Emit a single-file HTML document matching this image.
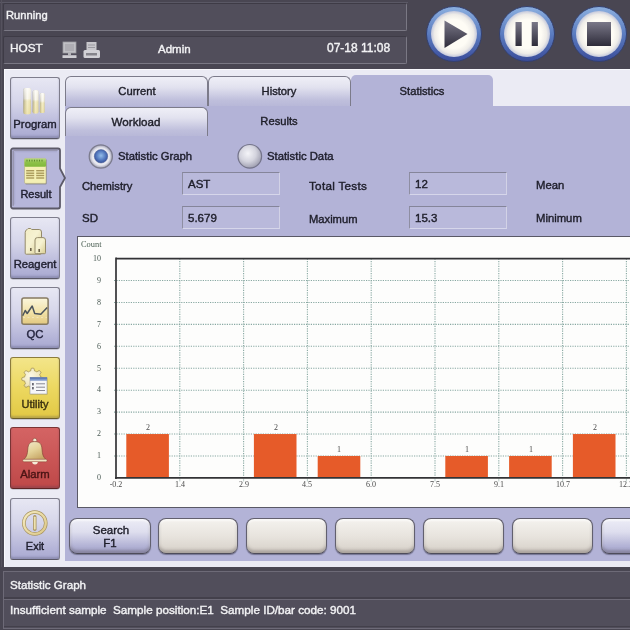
<!DOCTYPE html>
<html><head><meta charset="utf-8">
<style>
html,body{margin:0;padding:0;width:630px;height:630px;overflow:hidden;background:#494652;}
body{position:relative;font-family:"Liberation Sans", sans-serif;}
.t{position:absolute;white-space:nowrap;-webkit-text-stroke:0.4px currentColor;will-change:transform;}
.b{position:absolute;box-sizing:border-box;}
svg{position:absolute;overflow:visible;}
</style></head><body>

<div class="b" style="left:0px;top:0px;width:630px;height:69px;background:#494652;"></div>
<div class="b" style="left:0px;top:2px;width:408px;height:1px;background:#5a5865;"></div>
<div class="b" style="left:1px;top:0px;width:1px;height:630px;background:#55525e;"></div>
<div class="b" style="left:3px;top:3px;width:404px;height:28px;background:#514e5b;border-top:1px solid #3e3b46;border-left:1px solid #3e3b46;border-right:1.5px solid #7a7884;border-bottom:1.5px solid #7a7884;border-radius:2px;"></div>
<div class="b" style="left:3px;top:36px;width:404px;height:28px;background:#514e5b;border-top:1px solid #3e3b46;border-left:1px solid #3e3b46;border-right:1.5px solid #7a7884;border-bottom:1.5px solid #7a7884;border-radius:2px;"></div>
<div class="t" style="left:6.00px;top:10.02px;font-size:11.2px;line-height:11.2px;color:#f2f2f4;font-family:'Liberation Sans', sans-serif;">Running</div>
<div class="t" style="left:9.80px;top:42.71px;font-size:11.8px;line-height:11.8px;color:#f2f2f4;font-family:'Liberation Sans', sans-serif;">HOST</div>
<div class="t" style="left:157.50px;top:43.67px;font-size:11.5px;line-height:11.5px;color:#f2f2f4;font-family:'Liberation Sans', sans-serif;">Admin</div>
<div class="t" style="left:327.40px;top:42.44px;font-size:12px;line-height:12px;color:#f2f2f4;font-family:'Liberation Sans', sans-serif;">07-18 11:08</div>
<svg style="left:62px;top:41px" width="16" height="18" viewBox="0 0 16 18">
<rect x="1" y="1" width="13" height="11" fill="#c4c3c8" stroke="#9a999f" stroke-width="0.8"/>
<rect x="2.8" y="2.8" width="9.4" height="7.4" fill="#aeadb3"/>
<rect x="6" y="12" width="3" height="2.2" fill="#b4b3b8"/>
<rect x="0.5" y="14.2" width="14" height="2.8" fill="#cfced3"/>
</svg>
<svg style="left:83px;top:41px" width="18" height="18" viewBox="0 0 18 18">
<rect x="3.5" y="1" width="10" height="9" fill="#c8c7cc"/>
<line x1="5" y1="4" x2="12" y2="4" stroke="#9a99a0" stroke-width="1"/>
<line x1="5" y1="6.5" x2="12" y2="6.5" stroke="#9a99a0" stroke-width="1"/>
<rect x="0.5" y="9" width="16.5" height="8" rx="1.5" fill="#d2d1d6"/>
<rect x="3" y="12" width="11" height="2.5" fill="#85848b"/>
</svg>
<svg style="left:426px;top:6.200000000000003px" width="56" height="56" viewBox="0 0 56 56">
<defs>
<linearGradient id="ring454" x1="0" y1="0" x2="0" y2="1"><stop offset="0" stop-color="#8cb0e0"/><stop offset="0.5" stop-color="#5b7cc0"/><stop offset="1" stop-color="#3a4c9a"/></linearGradient>
<radialGradient id="face454" cx="0.5" cy="0.5" r="0.5"><stop offset="0.62" stop-color="#fefcf5"/><stop offset="0.85" stop-color="#eeece8"/><stop offset="1" stop-color="#c4c8dc"/></radialGradient>
<linearGradient id="ico454" x1="0" y1="0" x2="0" y2="1"><stop offset="0" stop-color="#7a7888"/><stop offset="1" stop-color="#2e2c3a"/></linearGradient>
</defs>
<circle cx="28" cy="28" r="27.5" fill="url(#ring454)" stroke="#34406e" stroke-width="1"/>
<circle cx="28" cy="28" r="23" fill="url(#face454)"/>
<polygon points="18.5,14.5 41.5,28 18.5,42" fill="url(#ico454)"/>
</svg>
<svg style="left:498.5px;top:6.200000000000003px" width="56" height="56" viewBox="0 0 56 56">
<defs>
<linearGradient id="ring526.5" x1="0" y1="0" x2="0" y2="1"><stop offset="0" stop-color="#8cb0e0"/><stop offset="0.5" stop-color="#5b7cc0"/><stop offset="1" stop-color="#3a4c9a"/></linearGradient>
<radialGradient id="face526.5" cx="0.5" cy="0.5" r="0.5"><stop offset="0.62" stop-color="#fefcf5"/><stop offset="0.85" stop-color="#eeece8"/><stop offset="1" stop-color="#c4c8dc"/></radialGradient>
<linearGradient id="ico526.5" x1="0" y1="0" x2="0" y2="1"><stop offset="0" stop-color="#7a7888"/><stop offset="1" stop-color="#2e2c3a"/></linearGradient>
</defs>
<circle cx="28" cy="28" r="27.5" fill="url(#ring526.5)" stroke="#34406e" stroke-width="1"/>
<circle cx="28" cy="28" r="23" fill="url(#face526.5)"/>
<rect x="16.5" y="16" width="6.2" height="24" fill="url(#ico526.5)"/><rect x="32.7" y="16" width="6.2" height="24" fill="url(#ico526.5)"/>
</svg>
<svg style="left:571px;top:6.200000000000003px" width="56" height="56" viewBox="0 0 56 56">
<defs>
<linearGradient id="ring599" x1="0" y1="0" x2="0" y2="1"><stop offset="0" stop-color="#8cb0e0"/><stop offset="0.5" stop-color="#5b7cc0"/><stop offset="1" stop-color="#3a4c9a"/></linearGradient>
<radialGradient id="face599" cx="0.5" cy="0.5" r="0.5"><stop offset="0.62" stop-color="#fefcf5"/><stop offset="0.85" stop-color="#eeece8"/><stop offset="1" stop-color="#c4c8dc"/></radialGradient>
<linearGradient id="ico599" x1="0" y1="0" x2="0" y2="1"><stop offset="0" stop-color="#7a7888"/><stop offset="1" stop-color="#2e2c3a"/></linearGradient>
</defs>
<circle cx="28" cy="28" r="27.5" fill="url(#ring599)" stroke="#34406e" stroke-width="1"/>
<circle cx="28" cy="28" r="23" fill="url(#face599)"/>
<rect x="16" y="16" width="24" height="24" fill="url(#ico599)"/>
</svg>
<div class="b" style="left:3.5px;top:68.5px;width:626.5px;height:498.5px;background:#ebebf4;border-left:1px solid #f8f8fc;border-top:1.5px solid #f8f8fc;"></div>
<div class="b" style="left:65px;top:106px;width:565px;height:455px;background:#b3b3d7;"></div>
<div class="b" style="left:65px;top:76px;width:143px;height:30px;background:linear-gradient(#efeff7 0%,#e2e2ef 35%,#bfbfdc 80%,#b8b8d8 100%);border:1px solid #7c7b8a;border-bottom:none;border-radius:6px 6px 0 0;"></div>
<div class="t" style="left:36.50px;width:200px;text-align:center;top:85.52px;font-size:11.2px;line-height:11.2px;color:#1e1e28;font-family:'Liberation Sans', sans-serif;">Current</div>
<div class="b" style="left:207.5px;top:76px;width:143px;height:30px;background:linear-gradient(#efeff7 0%,#e2e2ef 35%,#bfbfdc 80%,#b8b8d8 100%);border:1px solid #7c7b8a;border-bottom:none;border-radius:6px 6px 0 0;"></div>
<div class="t" style="left:179.00px;width:200px;text-align:center;top:85.52px;font-size:11.2px;line-height:11.2px;color:#1e1e28;font-family:'Liberation Sans', sans-serif;">History</div>
<div class="b" style="left:351px;top:75px;width:142px;height:31px;background:#b3b3d7;border-radius:5px 5px 0 0;"></div>
<div class="t" style="left:322.00px;width:200px;text-align:center;top:85.72px;font-size:11.2px;line-height:11.2px;color:#1e1e28;font-family:'Liberation Sans', sans-serif;">Statistics</div>
<div class="b" style="left:65px;top:106.8px;width:143px;height:29.2px;background:linear-gradient(#efeff7 0%,#e2e2ef 35%,#bfbfdc 80%,#b8b8d8 100%);border:1px solid #7c7b8a;border-bottom:none;border-radius:6px 6px 0 0;"></div>
<div class="t" style="left:35.50px;width:200px;text-align:center;top:116.18px;font-size:11.6px;line-height:11.6px;color:#1e1e28;font-family:'Liberation Sans', sans-serif;">Workload</div>
<div class="t" style="left:179.30px;width:200px;text-align:center;top:115.72px;font-size:11.2px;line-height:11.2px;color:#1e1e28;font-family:'Liberation Sans', sans-serif;">Results</div>
<div class="b" style="left:10px;top:76.5px;width:50px;height:62px;background:linear-gradient(#e7e7f3 0%,#d6d6ea 40%,#b3b3d7 85%,#a9a9d0 100%);border:1px solid #7e7d8c;border-bottom:1.6px solid #5a5866;border-radius:3px;box-shadow:inset 0 -2px 2px rgba(60,60,90,0.25), 0 0.5px 0 rgba(60,60,80,0.4);"></div>
<div class="t" style="left:-65.00px;width:200px;text-align:center;top:118.53px;font-size:11.3px;line-height:11.3px;color:#202030;font-family:'Liberation Sans', sans-serif;">Program</div>
<svg style="left:10px;top:146.5px" width="58" height="64" viewBox="0 0 58 64">
<path d="M3,1.5 H48 a2,2 0 0 1 2,2 V21.5 L55,31 L50,40 V59.5 a2,2 0 0 1 -2,2 H3 a2,2 0 0 1 -2,-2 V3.5 a2,2 0 0 1 2,-2 Z" fill="#b6b6da" stroke="#5c5a68" stroke-width="1.8"/>
<path d="M3.6,3.2 H47.6 M3.2,58.8 V3.6" fill="none" stroke="#8a889c" stroke-width="1.6" opacity="0.7"/>
<path d="M4.6,4.6 H47 M4.6,57.5 V4.6" fill="none" stroke="#a4a4c8" stroke-width="1.2" opacity="0.6"/>
</svg>
<div class="t" style="left:-64.30px;width:200px;text-align:center;top:188.79px;font-size:11px;line-height:11px;color:#202030;font-family:'Liberation Sans', sans-serif;">Result</div>
<div class="b" style="left:10px;top:216.5px;width:50px;height:62px;background:linear-gradient(#e7e7f3 0%,#d6d6ea 40%,#b3b3d7 85%,#a9a9d0 100%);border:1px solid #7e7d8c;border-bottom:1.6px solid #5a5866;border-radius:3px;box-shadow:inset 0 -2px 2px rgba(60,60,90,0.25), 0 0.5px 0 rgba(60,60,80,0.4);"></div>
<div class="t" style="left:-65.00px;width:200px;text-align:center;top:258.53px;font-size:11.3px;line-height:11.3px;color:#202030;font-family:'Liberation Sans', sans-serif;">Reagent</div>
<div class="b" style="left:10px;top:286.5px;width:50px;height:62px;background:linear-gradient(#e7e7f3 0%,#d6d6ea 40%,#b3b3d7 85%,#a9a9d0 100%);border:1px solid #7e7d8c;border-bottom:1.6px solid #5a5866;border-radius:3px;box-shadow:inset 0 -2px 2px rgba(60,60,90,0.25), 0 0.5px 0 rgba(60,60,80,0.4);"></div>
<div class="t" style="left:-65.00px;width:200px;text-align:center;top:328.53px;font-size:11.3px;line-height:11.3px;color:#262640;font-family:'Liberation Sans', sans-serif;">QC</div>
<div class="b" style="left:10px;top:356.5px;width:50px;height:62px;background:linear-gradient(#f3e58a 0%,#ecd860 50%,#e2c844 100%);border:1px solid #8c7c3c;border-bottom:1.6px solid #6a5c2c;border-radius:3px;box-shadow:inset 0 -2px 2px rgba(60,60,90,0.25), 0 0.5px 0 rgba(60,60,80,0.4);"></div>
<div class="t" style="left:-65.00px;width:200px;text-align:center;top:398.79px;font-size:11px;line-height:11px;color:#3a3010;font-family:'Liberation Sans', sans-serif;">Utility</div>
<div class="b" style="left:10px;top:426.5px;width:50px;height:62px;background:linear-gradient(#d46464 0%,#ca5656 50%,#be4848 100%);border:1px solid #7a3434;border-bottom:1.6px solid #5e2424;border-radius:3px;box-shadow:inset 0 -2px 2px rgba(60,60,90,0.25), 0 0.5px 0 rgba(60,60,80,0.4);"></div>
<div class="t" style="left:-65.00px;width:200px;text-align:center;top:468.53px;font-size:11.3px;line-height:11.3px;color:#4a1414;font-family:'Liberation Sans', sans-serif;">Alarm</div>
<div class="b" style="left:10px;top:497.5px;width:50px;height:62px;background:linear-gradient(#e7e7f3 0%,#d6d6ea 40%,#b3b3d7 85%,#a9a9d0 100%);border:1px solid #7e7d8c;border-bottom:1.6px solid #5a5866;border-radius:3px;box-shadow:inset 0 -2px 2px rgba(60,60,90,0.25), 0 0.5px 0 rgba(60,60,80,0.4);"></div>
<div class="t" style="left:-65.00px;width:200px;text-align:center;top:541.09px;font-size:11px;line-height:11px;color:#202030;font-family:'Liberation Sans', sans-serif;">Exit</div>
<svg style="left:10px;top:76.5px" width="50" height="62" viewBox="0 0 50 62"><defs>
<linearGradient id="tubeh" x1="0" y1="0" x2="1" y2="0"><stop offset="0" stop-color="#8a877e"/><stop offset="0.22" stop-color="#c8c2a8"/><stop offset="0.5" stop-color="#f8f4e4"/><stop offset="0.8" stop-color="#ebe4c4"/><stop offset="1" stop-color="#c8c0a0"/></linearGradient>
<linearGradient id="tubev" x1="0" y1="0" x2="0" y2="1"><stop offset="0" stop-color="#ffffff" stop-opacity="0.75"/><stop offset="0.4" stop-color="#ffffff" stop-opacity="0.45"/><stop offset="0.5" stop-color="#efe49a" stop-opacity="0.35"/><stop offset="1" stop-color="#e8d88a" stop-opacity="0.55"/></linearGradient>
</defs>
<rect x="13.3" y="11.1" width="7.8" height="26.1" rx="2.2" fill="url(#tubeh)"/>
<rect x="13.3" y="11.1" width="7.8" height="26.1" rx="2.2" fill="url(#tubev)"/>
<rect x="22.6" y="13.3" width="5.9" height="23.3" rx="1.8" fill="url(#tubeh)"/>
<rect x="22.6" y="13.3" width="5.9" height="23.3" rx="1.8" fill="url(#tubev)"/>
<rect x="29.8" y="16.1" width="4.8" height="20" rx="1.6" fill="url(#tubeh)"/>
<rect x="29.8" y="16.1" width="4.8" height="20" rx="1.6" fill="url(#tubev)"/>
</svg>
<svg style="left:10px;top:147px" width="50" height="62" viewBox="0 0 50 62"><defs>
<linearGradient id="grn" x1="0" y1="0" x2="0" y2="1"><stop offset="0" stop-color="#b4d880"/><stop offset="0.5" stop-color="#8cc048"/><stop offset="1" stop-color="#80b83c"/></linearGradient>
</defs>
<rect x="15.2" y="12.2" width="21.5" height="25.3" rx="1.2" fill="#6a6850" opacity="0.5"/>
<rect x="14.5" y="11.4" width="21.5" height="25" rx="1.2" fill="#f4f0b4" stroke="#a8a27a" stroke-width="0.5"/>
<rect x="14.5" y="11.4" width="21.5" height="8.4" rx="1" fill="url(#grn)"/>
<path d="M16.5,13.6 h17.5" stroke="#5c8a28" stroke-width="1.6" stroke-dasharray="1,1.5"/>
<g stroke="#aa9a5a" stroke-width="1.4">
<line x1="16.2" y1="23.7" x2="24.2" y2="23.7"/><line x1="26.2" y1="23.7" x2="34.2" y2="23.7"/>
<line x1="16.2" y1="26.2" x2="24.2" y2="26.2"/><line x1="26.2" y1="26.2" x2="34.2" y2="26.2"/>
<line x1="16.2" y1="28.5" x2="24.2" y2="28.5"/><line x1="26.2" y1="28.5" x2="34.2" y2="28.5"/>
<line x1="16.2" y1="31" x2="24.2" y2="31"/><line x1="26.2" y1="31" x2="34.2" y2="31"/>
</g>
</svg>
<svg style="left:10px;top:216.5px" width="50" height="62" viewBox="0 0 50 62"><defs>
<linearGradient id="btl" x1="0" y1="0" x2="1" y2="1"><stop offset="0" stop-color="#f2ecc4"/><stop offset="0.45" stop-color="#f6f2d2"/><stop offset="1" stop-color="#d8cc90"/></linearGradient>
</defs>
<path d="M15.2,15.5 q0,-2.5 2,-3 l1,-1 h2.5 l1,1 h7.5 q2.3,0 2.3,2.5 v21.2 q0,1 -1,1 h-14.3 q-1,0 -1,-1 Z" fill="url(#btl)" stroke="#948a6a" stroke-width="1"/>
<path d="M25,23 q0,-2.4 2.5,-2.4 h5.5 q2.5,0 2.5,2.5 v12.6 q0,1 -1,1 h-8.5 q-1,0 -1,-1 Z" fill="url(#btl)" stroke="#948a6a" stroke-width="1"/>
<rect x="20" y="31" width="1.6" height="3" fill="#6a6048"/>
<rect x="28.4" y="32" width="1.6" height="3" fill="#6a6048"/>
</svg>
<svg style="left:10px;top:286.5px" width="50" height="62" viewBox="0 0 50 62"><defs>
<linearGradient id="qcg" x1="0" y1="0" x2="0" y2="1"><stop offset="0" stop-color="#fbf6dc"/><stop offset="0.55" stop-color="#f2e2a8"/><stop offset="1" stop-color="#e2c880"/></linearGradient>
</defs>
<rect x="11.9" y="11" width="26.2" height="26.2" rx="2" fill="url(#qcg)" stroke="#867a62" stroke-width="1.5"/>
<path d="M12.7,28.7 L15.2,23.5 L17.2,26.5 L22.2,19 L24.7,26.5 L30.8,27.3 L37.2,20.6" fill="none" stroke="#4c545c" stroke-width="1.5" stroke-linejoin="round"/>
<path d="M13,30.5 h24" stroke="#f8f0d0" stroke-width="0.8" stroke-dasharray="2,2.5" opacity="0.7"/>
</svg>
<svg style="left:10px;top:356.5px" width="50" height="62" viewBox="0 0 50 62"><defs>
<radialGradient id="gearg" cx="0.4" cy="0.35" r="0.75"><stop offset="0" stop-color="#fcf8e6"/><stop offset="0.6" stop-color="#efe6bc"/><stop offset="1" stop-color="#c8b880"/></radialGradient>
</defs>
<path d="M30.27,25.18 L30.18,25.38 L30.09,25.57 L30.00,25.77 L29.89,25.96 L29.79,26.15 L29.68,26.34 L30.01,26.81 L30.36,27.33 L30.67,27.86 L30.93,28.39 L30.99,28.80 L30.81,29.01 L30.63,29.23 L30.43,29.43 L30.24,29.64 L30.03,29.83 L29.83,30.03 L29.61,30.21 L29.40,30.39 L28.99,30.33 L28.46,30.07 L27.93,29.76 L27.41,29.41 L26.94,29.08 L26.75,29.19 L26.56,29.29 L26.37,29.40 L26.17,29.49 L25.98,29.58 L25.78,29.67 L25.57,29.75 L25.37,29.82 L25.16,29.89 L24.96,29.96 L24.75,30.02 L24.54,30.07 L24.44,30.64 L24.32,31.25 L24.16,31.85 L23.97,32.41 L23.73,32.74 L23.45,32.77 L23.17,32.79 L22.88,32.80 L22.60,32.80 L22.32,32.80 L22.03,32.79 L21.75,32.77 L21.47,32.74 L21.23,32.41 L21.04,31.85 L20.88,31.25 L20.76,30.64 L20.66,30.07 L20.45,30.02 L20.24,29.96 L20.04,29.89 L19.83,29.82 L19.63,29.75 L19.42,29.67 L19.22,29.58 L19.03,29.49 L18.83,29.40 L18.64,29.29 L18.45,29.19 L18.26,29.08 L17.79,29.41 L17.27,29.76 L16.74,30.07 L16.21,30.33 L15.80,30.39 L15.59,30.21 L15.37,30.03 L15.17,29.83 L14.96,29.64 L14.77,29.43 L14.57,29.23 L14.39,29.01 L14.21,28.80 L14.27,28.39 L14.53,27.86 L14.84,27.33 L15.19,26.81 L15.52,26.34 L15.41,26.15 L15.31,25.96 L15.20,25.77 L15.11,25.57 L15.02,25.38 L14.93,25.18 L14.85,24.97 L14.78,24.77 L14.71,24.56 L14.64,24.36 L14.58,24.15 L14.53,23.94 L13.96,23.84 L13.35,23.72 L12.75,23.56 L12.19,23.37 L11.86,23.13 L11.83,22.85 L11.81,22.57 L11.80,22.28 L11.80,22.00 L11.80,21.72 L11.81,21.43 L11.83,21.15 L11.86,20.87 L12.19,20.63 L12.75,20.44 L13.35,20.28 L13.96,20.16 L14.53,20.06 L14.58,19.85 L14.64,19.64 L14.71,19.44 L14.78,19.23 L14.85,19.03 L14.93,18.82 L15.02,18.62 L15.11,18.43 L15.20,18.23 L15.31,18.04 L15.41,17.85 L15.52,17.66 L15.19,17.19 L14.84,16.67 L14.53,16.14 L14.27,15.61 L14.21,15.20 L14.39,14.99 L14.57,14.77 L14.77,14.57 L14.96,14.36 L15.17,14.17 L15.37,13.97 L15.59,13.79 L15.80,13.61 L16.21,13.67 L16.74,13.93 L17.27,14.24 L17.79,14.59 L18.26,14.92 L18.45,14.81 L18.64,14.71 L18.83,14.60 L19.03,14.51 L19.22,14.42 L19.42,14.33 L19.63,14.25 L19.83,14.18 L20.04,14.11 L20.24,14.04 L20.45,13.98 L20.66,13.93 L20.76,13.36 L20.88,12.75 L21.04,12.15 L21.23,11.59 L21.47,11.26 L21.75,11.23 L22.03,11.21 L22.32,11.20 L22.60,11.20 L22.88,11.20 L23.17,11.21 L23.45,11.23 L23.73,11.26 L23.97,11.59 L24.16,12.15 L24.32,12.75 L24.44,13.36 L24.54,13.93 L24.75,13.98 L24.96,14.04 L25.16,14.11 L25.37,14.18 L25.57,14.25 L25.78,14.33 L25.98,14.42 L26.17,14.51 L26.37,14.60 L26.56,14.71 L26.75,14.81 L26.94,14.92 L27.41,14.59 L27.93,14.24 L28.46,13.93 L28.99,13.67 L29.40,13.61 L29.61,13.79 L29.83,13.97 L30.03,14.17 L30.24,14.36 L30.43,14.57 L30.63,14.77 L30.81,14.99 L30.99,15.20 L30.93,15.61 L30.67,16.14 L30.36,16.67 L30.01,17.19 L29.68,17.66 L29.79,17.85 L29.89,18.04 L30.00,18.23 L30.09,18.43 L30.18,18.62 L30.27,18.82 L30.35,19.03 L30.42,19.23 L30.49,19.44 L30.56,19.64 L30.62,19.85 L30.67,20.06 L31.24,20.16 L31.85,20.28 L32.45,20.44 L33.01,20.63 L33.34,20.87 L33.37,21.15 L33.39,21.43 L33.40,21.72 L33.40,22.00 L33.40,22.28 L33.39,22.57 L33.37,22.85 L33.34,23.13 L33.01,23.37 L32.45,23.56 L31.85,23.72 L31.24,23.84 L30.67,23.94 L30.62,24.15 L30.56,24.36 L30.49,24.56 L30.42,24.77 L30.35,24.97 Z" fill="url(#gearg)" stroke="#9c8c50" stroke-width="0.8"/>

<rect x="20.5" y="21" width="17" height="16.5" fill="#7a7050" opacity="0.35"/>
<rect x="20" y="20.5" width="17" height="16.5" fill="#f6f6f8" stroke="#9a9a9a" stroke-width="0.6"/>
<rect x="20" y="20.5" width="17" height="3.2" fill="#7c98cc"/><rect x="20" y="20.5" width="17" height="1" fill="#4a64a0"/>
<g stroke="#7a7a88" stroke-width="0.9"><line x1="26" y1="26.8" x2="35" y2="26.8"/><line x1="26" y1="30.2" x2="35" y2="30.2"/><line x1="26" y1="33.5" x2="35" y2="33.5"/></g>
<g fill="#6a6a76"><rect x="22" y="26" width="1.8" height="2.4"/><rect x="22" y="30" width="1.8" height="2.4"/></g>
</svg>
<svg style="left:10px;top:426.5px" width="50" height="62" viewBox="0 0 50 62"><defs>
<linearGradient id="bellg" x1="0" y1="0" x2="0.6" y2="1"><stop offset="0" stop-color="#f2ead0"/><stop offset="0.55" stop-color="#e4d298"/><stop offset="1" stop-color="#c8a868"/></linearGradient>
</defs>
<circle cx="24.8" cy="13.2" r="2" fill="#f2ead4" stroke="#8a4838" stroke-width="0.6"/>
<path d="M24.8,14.6 C19.5,14.6 18.2,17.5 17.8,22 C17.4,27 17,29.5 13.8,32.6 L36,32.6 C32.8,29.5 32.4,27 32,22 C31.6,17.5 30.3,14.6 24.8,14.6 Z" fill="url(#bellg)" stroke="#8a4838" stroke-width="0.7"/>
<rect x="12.8" y="32.2" width="24.2" height="2.6" rx="1.2" fill="#f0e6c4" stroke="#8a4838" stroke-width="0.5"/>
<path d="M22.2,35 a2.8,2.4 0 0 0 5.6,0 Z" fill="#f4ecd8"/>
</svg>
<svg style="left:10px;top:497.5px" width="50" height="62" viewBox="0 0 50 62"><defs>
<linearGradient id="pwr" x1="0" y1="0" x2="1" y2="1"><stop offset="0" stop-color="#f6ecc0"/><stop offset="1" stop-color="#dcc888"/></linearGradient>
</defs>
<circle cx="24.8" cy="25" r="11" fill="none" stroke="#a89460" stroke-width="3.6"/>
<circle cx="24.8" cy="25" r="11" fill="none" stroke="url(#pwr)" stroke-width="2.2"/>
<line x1="24.8" y1="18.8" x2="24.8" y2="31.2" stroke="#a89460" stroke-width="3.4" stroke-linecap="round"/>
<line x1="24.8" y1="19.3" x2="24.8" y2="30.7" stroke="#eee2b0" stroke-width="1.8" stroke-linecap="round"/>
</svg>
<svg style="left:88px;top:144px" width="26" height="26" viewBox="0 0 26 26">
<defs><radialGradient id="r1" cx="0.5" cy="0.5" r="0.5"><stop offset="0.5" stop-color="#f4f4f8"/><stop offset="0.75" stop-color="#e4e4ec"/><stop offset="0.92" stop-color="#b4b4c4"/><stop offset="1" stop-color="#8a8a9c"/></radialGradient>
<radialGradient id="r1b" cx="0.5" cy="0.45" r="0.55"><stop offset="0" stop-color="#94bce8"/><stop offset="0.55" stop-color="#5a80c4"/><stop offset="1" stop-color="#34509a"/></radialGradient></defs>
<circle cx="12.8" cy="12.5" r="11.6" fill="url(#r1)" stroke="#7c7c8e" stroke-width="1.2"/>
<circle cx="13" cy="12.3" r="6.7" fill="url(#r1b)" stroke="#4a5a90" stroke-width="0.5"/>
</svg>
<div class="t" style="left:117.90px;top:150.83px;font-size:11.3px;line-height:11.3px;color:#1e1e2c;font-family:'Liberation Sans', sans-serif;">Statistic Graph</div>
<svg style="left:237px;top:144px" width="26" height="26" viewBox="0 0 26 26">
<defs><radialGradient id="r2" cx="0.42" cy="0.38" r="0.68"><stop offset="0" stop-color="#f4f4f8"/><stop offset="0.5" stop-color="#d4d4de"/><stop offset="0.85" stop-color="#a8a8b8"/><stop offset="1" stop-color="#8a8a9c"/></radialGradient></defs>
<circle cx="12.8" cy="12.3" r="11.8" fill="url(#r2)" stroke="#74748a" stroke-width="1.2"/>
</svg>
<div class="t" style="left:266.70px;top:150.83px;font-size:11.3px;line-height:11.3px;color:#1e1e2c;font-family:'Liberation Sans', sans-serif;">Statistic Data</div>
<div class="t" style="left:81.50px;top:180.62px;font-size:11.2px;line-height:11.2px;color:#1e1e2a;font-family:'Liberation Sans', sans-serif;">Chemistry</div>
<div class="b" style="left:181.5px;top:172.4px;width:98px;height:22.8px;background:#b9b9db;border-top:1.6px solid #85859a;border-left:1.6px solid #8e8ea2;border-right:1px solid #d2d2e6;border-bottom:1px solid #d6d6ea;"></div>
<div class="t" style="left:187.50px;top:179.27px;font-size:11.5px;line-height:11.5px;color:#1e1e2a;font-family:'Liberation Sans', sans-serif;">AST</div>
<div class="t" style="left:309.20px;top:179.50px;font-size:11.7px;line-height:11.7px;color:#1e1e2a;font-family:'Liberation Sans', sans-serif;letter-spacing:0.28px;">Total Tests</div>
<div class="b" style="left:409px;top:172.4px;width:98px;height:22.8px;background:#b9b9db;border-top:1.6px solid #85859a;border-left:1.6px solid #8e8ea2;border-right:1px solid #d2d2e6;border-bottom:1px solid #d6d6ea;"></div>
<div class="t" style="left:415.00px;top:179.27px;font-size:11.5px;line-height:11.5px;color:#1e1e2a;font-family:'Liberation Sans', sans-serif;">12</div>
<div class="t" style="left:535.80px;top:180.23px;font-size:11.3px;line-height:11.3px;color:#1e1e2a;font-family:'Liberation Sans', sans-serif;">Mean</div>
<div class="t" style="left:81.50px;top:213.27px;font-size:11.5px;line-height:11.5px;color:#1e1e2a;font-family:'Liberation Sans', sans-serif;">SD</div>
<div class="b" style="left:181.5px;top:206.2px;width:98px;height:22.6px;background:#b9b9db;border-top:1.6px solid #85859a;border-left:1.6px solid #8e8ea2;border-right:1px solid #d2d2e6;border-bottom:1px solid #d6d6ea;"></div>
<div class="t" style="left:187.50px;top:213.47px;font-size:11.5px;line-height:11.5px;color:#1e1e2a;font-family:'Liberation Sans', sans-serif;">5.679</div>
<div class="t" style="left:309.10px;top:213.52px;font-size:11.2px;line-height:11.2px;color:#1e1e2a;font-family:'Liberation Sans', sans-serif;">Maximum</div>
<div class="b" style="left:409px;top:206.2px;width:98px;height:22.6px;background:#b9b9db;border-top:1.6px solid #85859a;border-left:1.6px solid #8e8ea2;border-right:1px solid #d2d2e6;border-bottom:1px solid #d6d6ea;"></div>
<div class="t" style="left:415.00px;top:213.47px;font-size:11.5px;line-height:11.5px;color:#1e1e2a;font-family:'Liberation Sans', sans-serif;">15.3</div>
<div class="t" style="left:535.80px;top:213.43px;font-size:11.3px;line-height:11.3px;color:#1e1e2a;font-family:'Liberation Sans', sans-serif;">Minimum</div>
<div class="b" style="left:77px;top:236px;width:560px;height:272.4px;background:#fdfdfc;border:1.5px solid #5a5966;border-top:1.8px solid #5a5966;"></div>
<svg style="left:0;top:0" width="630" height="630" viewBox="0 0 630 630">
<line x1="114.0" y1="280.53" x2="640" y2="280.53" stroke="#88a8a2" stroke-width="1.1" stroke-dasharray="1.2,1.2"/>
<line x1="114.0" y1="302.46" x2="640" y2="302.46" stroke="#88a8a2" stroke-width="1.1" stroke-dasharray="1.2,1.2"/>
<line x1="114.0" y1="324.39" x2="640" y2="324.39" stroke="#88a8a2" stroke-width="1.1" stroke-dasharray="1.2,1.2"/>
<line x1="114.0" y1="346.32" x2="640" y2="346.32" stroke="#88a8a2" stroke-width="1.1" stroke-dasharray="1.2,1.2"/>
<line x1="114.0" y1="368.25" x2="640" y2="368.25" stroke="#88a8a2" stroke-width="1.1" stroke-dasharray="1.2,1.2"/>
<line x1="114.0" y1="390.18" x2="640" y2="390.18" stroke="#88a8a2" stroke-width="1.1" stroke-dasharray="1.2,1.2"/>
<line x1="114.0" y1="412.11" x2="640" y2="412.11" stroke="#88a8a2" stroke-width="1.1" stroke-dasharray="1.2,1.2"/>
<line x1="114.0" y1="434.04" x2="640" y2="434.04" stroke="#88a8a2" stroke-width="1.1" stroke-dasharray="1.2,1.2"/>
<line x1="114.0" y1="455.97" x2="640" y2="455.97" stroke="#88a8a2" stroke-width="1.1" stroke-dasharray="1.2,1.2"/>
<line x1="179.80" y1="258.6" x2="179.80" y2="481.90000000000003" stroke="#88a8a2" stroke-width="1.1" stroke-dasharray="1.2,1.2"/>
<line x1="243.60" y1="258.6" x2="243.60" y2="481.90000000000003" stroke="#88a8a2" stroke-width="1.1" stroke-dasharray="1.2,1.2"/>
<line x1="307.40" y1="258.6" x2="307.40" y2="481.90000000000003" stroke="#88a8a2" stroke-width="1.1" stroke-dasharray="1.2,1.2"/>
<line x1="371.20" y1="258.6" x2="371.20" y2="481.90000000000003" stroke="#88a8a2" stroke-width="1.1" stroke-dasharray="1.2,1.2"/>
<line x1="435.00" y1="258.6" x2="435.00" y2="481.90000000000003" stroke="#88a8a2" stroke-width="1.1" stroke-dasharray="1.2,1.2"/>
<line x1="498.80" y1="258.6" x2="498.80" y2="481.90000000000003" stroke="#88a8a2" stroke-width="1.1" stroke-dasharray="1.2,1.2"/>
<line x1="562.60" y1="258.6" x2="562.60" y2="481.90000000000003" stroke="#88a8a2" stroke-width="1.1" stroke-dasharray="1.2,1.2"/>
<line x1="626.40" y1="258.6" x2="626.40" y2="481.90000000000003" stroke="#88a8a2" stroke-width="1.1" stroke-dasharray="1.2,1.2"/>
<rect x="126.30" y="434.04" width="42.6" height="43.86" fill="#e65b29"/>
<rect x="253.90" y="434.04" width="42.6" height="43.86" fill="#e65b29"/>
<rect x="317.70" y="455.97" width="42.6" height="21.93" fill="#e65b29"/>
<rect x="445.30" y="455.97" width="42.6" height="21.93" fill="#e65b29"/>
<rect x="509.10" y="455.97" width="42.6" height="21.93" fill="#e65b29"/>
<rect x="572.90" y="434.04" width="42.6" height="43.86" fill="#e65b29"/>
<line x1="116.0" y1="258.6" x2="640" y2="258.6" stroke="#333336" stroke-width="1.7"/>
<line x1="116.0" y1="257.6" x2="116.0" y2="478.90000000000003" stroke="#333336" stroke-width="1.7"/>
<line x1="115.0" y1="477.90000000000003" x2="640" y2="477.90000000000003" stroke="#333336" stroke-width="1.7"/>
</svg>
<div class="t" style="left:80.90px;top:241.06px;font-size:8.4px;line-height:8.4px;color:#4a5e52;font-family:'Liberation Serif', serif;-webkit-text-stroke:0;">Count</div>
<div class="t" style="left:-99.50px;width:200px;text-align:right;top:474.20px;font-size:8px;line-height:8px;color:#4a5a54;font-family:'Liberation Serif', serif;-webkit-text-stroke:0;">0</div>
<div class="t" style="left:-99.50px;width:200px;text-align:right;top:452.27px;font-size:8px;line-height:8px;color:#4a5a54;font-family:'Liberation Serif', serif;-webkit-text-stroke:0;">1</div>
<div class="t" style="left:-99.50px;width:200px;text-align:right;top:430.34px;font-size:8px;line-height:8px;color:#4a5a54;font-family:'Liberation Serif', serif;-webkit-text-stroke:0;">2</div>
<div class="t" style="left:-99.50px;width:200px;text-align:right;top:408.41px;font-size:8px;line-height:8px;color:#4a5a54;font-family:'Liberation Serif', serif;-webkit-text-stroke:0;">3</div>
<div class="t" style="left:-99.50px;width:200px;text-align:right;top:386.48px;font-size:8px;line-height:8px;color:#4a5a54;font-family:'Liberation Serif', serif;-webkit-text-stroke:0;">4</div>
<div class="t" style="left:-99.50px;width:200px;text-align:right;top:364.55px;font-size:8px;line-height:8px;color:#4a5a54;font-family:'Liberation Serif', serif;-webkit-text-stroke:0;">5</div>
<div class="t" style="left:-99.50px;width:200px;text-align:right;top:342.62px;font-size:8px;line-height:8px;color:#4a5a54;font-family:'Liberation Serif', serif;-webkit-text-stroke:0;">6</div>
<div class="t" style="left:-99.50px;width:200px;text-align:right;top:320.69px;font-size:8px;line-height:8px;color:#4a5a54;font-family:'Liberation Serif', serif;-webkit-text-stroke:0;">7</div>
<div class="t" style="left:-99.50px;width:200px;text-align:right;top:298.76px;font-size:8px;line-height:8px;color:#4a5a54;font-family:'Liberation Serif', serif;-webkit-text-stroke:0;">8</div>
<div class="t" style="left:-99.50px;width:200px;text-align:right;top:276.83px;font-size:8px;line-height:8px;color:#4a5a54;font-family:'Liberation Serif', serif;-webkit-text-stroke:0;">9</div>
<div class="t" style="left:-99.50px;width:200px;text-align:right;top:254.90px;font-size:8px;line-height:8px;color:#4a5a54;font-family:'Liberation Serif', serif;-webkit-text-stroke:0;">10</div>
<div class="t" style="left:16.00px;width:200px;text-align:center;top:480.50px;font-size:8px;line-height:8px;color:#4a4a4a;font-family:'Liberation Serif', serif;-webkit-text-stroke:0;">-0.2</div>
<div class="t" style="left:79.80px;width:200px;text-align:center;top:480.50px;font-size:8px;line-height:8px;color:#4a4a4a;font-family:'Liberation Serif', serif;-webkit-text-stroke:0;">1.4</div>
<div class="t" style="left:143.60px;width:200px;text-align:center;top:480.50px;font-size:8px;line-height:8px;color:#4a4a4a;font-family:'Liberation Serif', serif;-webkit-text-stroke:0;">2.9</div>
<div class="t" style="left:207.40px;width:200px;text-align:center;top:480.50px;font-size:8px;line-height:8px;color:#4a4a4a;font-family:'Liberation Serif', serif;-webkit-text-stroke:0;">4.5</div>
<div class="t" style="left:271.20px;width:200px;text-align:center;top:480.50px;font-size:8px;line-height:8px;color:#4a4a4a;font-family:'Liberation Serif', serif;-webkit-text-stroke:0;">6.0</div>
<div class="t" style="left:335.00px;width:200px;text-align:center;top:480.50px;font-size:8px;line-height:8px;color:#4a4a4a;font-family:'Liberation Serif', serif;-webkit-text-stroke:0;">7.5</div>
<div class="t" style="left:398.80px;width:200px;text-align:center;top:480.50px;font-size:8px;line-height:8px;color:#4a4a4a;font-family:'Liberation Serif', serif;-webkit-text-stroke:0;">9.1</div>
<div class="t" style="left:462.60px;width:200px;text-align:center;top:480.50px;font-size:8px;line-height:8px;color:#4a4a4a;font-family:'Liberation Serif', serif;-webkit-text-stroke:0;">10.7</div>
<div class="t" style="left:526.40px;width:200px;text-align:center;top:480.50px;font-size:8px;line-height:8px;color:#4a4a4a;font-family:'Liberation Serif', serif;-webkit-text-stroke:0;">12.2</div>
<div class="t" style="left:47.90px;width:200px;text-align:center;top:424.34px;font-size:8px;line-height:8px;color:#4a4a4a;font-family:'Liberation Serif', serif;-webkit-text-stroke:0;">2</div>
<div class="t" style="left:175.50px;width:200px;text-align:center;top:424.34px;font-size:8px;line-height:8px;color:#4a4a4a;font-family:'Liberation Serif', serif;-webkit-text-stroke:0;">2</div>
<div class="t" style="left:239.30px;width:200px;text-align:center;top:446.27px;font-size:8px;line-height:8px;color:#4a4a4a;font-family:'Liberation Serif', serif;-webkit-text-stroke:0;">1</div>
<div class="t" style="left:366.90px;width:200px;text-align:center;top:446.27px;font-size:8px;line-height:8px;color:#4a4a4a;font-family:'Liberation Serif', serif;-webkit-text-stroke:0;">1</div>
<div class="t" style="left:430.70px;width:200px;text-align:center;top:446.27px;font-size:8px;line-height:8px;color:#4a4a4a;font-family:'Liberation Serif', serif;-webkit-text-stroke:0;">1</div>
<div class="t" style="left:494.50px;width:200px;text-align:center;top:424.34px;font-size:8px;line-height:8px;color:#4a4a4a;font-family:'Liberation Serif', serif;-webkit-text-stroke:0;">2</div>
<div class="b" style="left:69px;top:518.1px;width:81.8px;height:35.6px;background:linear-gradient(#ececf6 0%,#dedeee 38%,#b4b4d6 78%,#a4a4cc 100%);border:1px solid #62606e;border-bottom:1.5px solid #4e4c5a;border-radius:8px;box-shadow:inset 0 -3px 3px rgba(70,60,60,0.30), inset 0 2px 2px rgba(255,255,255,0.6), 0 1px 1px rgba(40,40,60,0.45);"></div>
<div class="t" style="left:10.80px;width:200px;text-align:center;top:524.67px;font-size:11.5px;line-height:11.5px;color:#1e1e2a;font-family:'Liberation Sans', sans-serif;">Search</div>
<div class="t" style="left:10.20px;width:200px;text-align:center;top:538.17px;font-size:11.5px;line-height:11.5px;color:#1e1e2a;font-family:'Liberation Sans', sans-serif;">F1</div>
<div class="b" style="left:157.5px;top:518.1px;width:80.8px;height:35.6px;background:linear-gradient(#f4f2ee 0%,#e8e4de 50%,#d6d0c8 100%);border:1px solid #62606e;border-bottom:1.5px solid #4e4c5a;border-radius:8px;box-shadow:inset 0 -3px 3px rgba(70,60,60,0.30), inset 0 2px 2px rgba(255,255,255,0.6), 0 1px 1px rgba(40,40,60,0.45);"></div>
<div class="b" style="left:246.1px;top:518.1px;width:80.8px;height:35.6px;background:linear-gradient(#f4f2ee 0%,#e8e4de 50%,#d6d0c8 100%);border:1px solid #62606e;border-bottom:1.5px solid #4e4c5a;border-radius:8px;box-shadow:inset 0 -3px 3px rgba(70,60,60,0.30), inset 0 2px 2px rgba(255,255,255,0.6), 0 1px 1px rgba(40,40,60,0.45);"></div>
<div class="b" style="left:334.7px;top:518.1px;width:80.8px;height:35.6px;background:linear-gradient(#f4f2ee 0%,#e8e4de 50%,#d6d0c8 100%);border:1px solid #62606e;border-bottom:1.5px solid #4e4c5a;border-radius:8px;box-shadow:inset 0 -3px 3px rgba(70,60,60,0.30), inset 0 2px 2px rgba(255,255,255,0.6), 0 1px 1px rgba(40,40,60,0.45);"></div>
<div class="b" style="left:423.29999999999995px;top:518.1px;width:80.8px;height:35.6px;background:linear-gradient(#f4f2ee 0%,#e8e4de 50%,#d6d0c8 100%);border:1px solid #62606e;border-bottom:1.5px solid #4e4c5a;border-radius:8px;box-shadow:inset 0 -3px 3px rgba(70,60,60,0.30), inset 0 2px 2px rgba(255,255,255,0.6), 0 1px 1px rgba(40,40,60,0.45);"></div>
<div class="b" style="left:511.9px;top:518.1px;width:80.8px;height:35.6px;background:linear-gradient(#f4f2ee 0%,#e8e4de 50%,#d6d0c8 100%);border:1px solid #62606e;border-bottom:1.5px solid #4e4c5a;border-radius:8px;box-shadow:inset 0 -3px 3px rgba(70,60,60,0.30), inset 0 2px 2px rgba(255,255,255,0.6), 0 1px 1px rgba(40,40,60,0.45);"></div>
<div class="b" style="left:600.5px;top:518.1px;width:80.8px;height:35.6px;background:linear-gradient(#ececf6 0%,#dedeee 38%,#b4b4d6 78%,#a4a4cc 100%);border:1px solid #62606e;border-bottom:1.5px solid #4e4c5a;border-radius:8px;box-shadow:inset 0 -3px 3px rgba(70,60,60,0.30), inset 0 2px 2px rgba(255,255,255,0.6), 0 1px 1px rgba(40,40,60,0.45);"></div>
<div class="b" style="left:0px;top:567px;width:630px;height:63px;background:#494652;"></div>
<div class="b" style="left:3px;top:570.5px;width:640px;height:58px;background:#514e5b;border-top:1px solid #6d6a77;border-left:1px solid #6d6a77;border-bottom:1.2px solid #6d6a77;"></div>
<div class="b" style="left:3.5px;top:598.6px;width:640px;height:1.3px;background:#6d6a77;"></div>
<div class="b" style="left:3.5px;top:597.4px;width:640px;height:1.2px;background:#43404b;"></div>
<div class="b" style="left:3.5px;top:626.2px;width:640px;height:1.2px;background:#43404b;"></div>
<div class="t" style="left:9.60px;top:579.18px;font-size:11.6px;line-height:11.6px;color:#f2f2f4;font-family:'Liberation Sans', sans-serif;">Statistic Graph</div>
<div class="t" style="left:9.80px;top:603.90px;font-size:11.7px;line-height:11.7px;color:#f2f2f4;font-family:'Liberation Sans', sans-serif;">Insufficient sample&nbsp;&nbsp;Sample position:E1&nbsp;&nbsp;Sample ID/bar code: 9001</div>
</body></html>
